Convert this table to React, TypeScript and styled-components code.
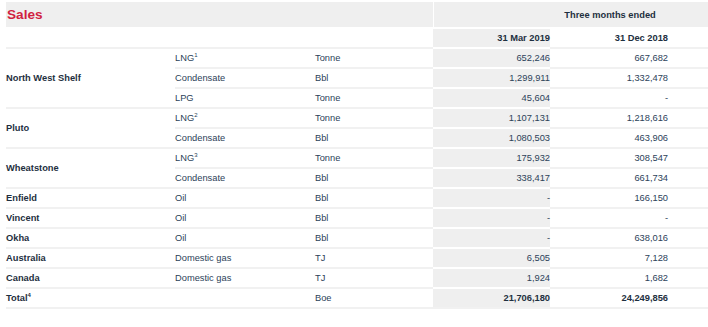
import React from 'react';
import styled, { createGlobalStyle } from 'styled-components';

const GlobalStyle = createGlobalStyle`
  html, body {
    margin: 0;
    padding: 0;
    background: #fff;
    overflow: hidden;
  }
  body {
    font-family: 'Liberation Sans', Arial, sans-serif;
  }
`;

/* styled components */
const Wrapper = styled.div`
  padding: 2px 0 0 6px;
`;

const Table = styled.table`
  border-collapse: separate;
  border-spacing: 0;
  table-layout: fixed;
  width: 702px;
  font-size: 9.3px;
  color: #2c4259;
`;

const TitleCell = styled.th`
  height: 25px;
  padding: 0 0 0 1px;
  background: #efefef;
  text-align: left;
  font-size: 13.6px;
  font-weight: bold;
  color: #d11f41;
`;

const PeriodCell = styled.th`
  padding: 0 0 0 78px;
  background: #efefef;
  border-left: 1px solid #fff;
  text-align: center;
  font-weight: bold;
  color: #1e2f40;
  white-space: nowrap;
`;

const DateCell = styled.th<{ $shaded?: boolean }>`
  height: 18px;
  padding: 0;
  border-top: 2px solid #fff;
  background: ${(p) => (p.$shaded ? '#efefef' : 'transparent')};
  text-align: right;
  font-weight: bold;
  color: #1e2f40;
`;

const Cell = styled.td<{ $shaded?: boolean; $right?: boolean; $bold?: boolean; $last?: boolean }>`
  height: 18px;
  padding: 0;
  border-top: 2px solid ${(p) => (p.$shaded ? '#fff' : '#f1f1f1')};
  border-bottom: ${(p) => (p.$last ? '2px solid #f1f1f1' : 'none')};
  background: ${(p) => (p.$shaded ? '#efefef' : 'transparent')};
  text-align: ${(p) => (p.$right ? 'right' : 'left')};
  font-weight: ${(p) => (p.$bold ? 'bold' : 'normal')};
  color: ${(p) => (p.$bold ? '#1e2f40' : '#2c4259')};
  white-space: nowrap;
  vertical-align: middle;
`;

const Sup = styled.sup`
  font-size: 6px;
  line-height: 0;
  vertical-align: 4px;
`;

type SalesRow = {
  product: string;
  note?: string;
  unit: string;
  current: string;
  previous: string;
};

type Asset = { name: string; rows: SalesRow[] };

const assets: Asset[] = [
  {
    name: 'North West Shelf',
    rows: [
      { product: 'LNG', note: '1', unit: 'Tonne', current: '652,246', previous: '667,682' },
      { product: 'Condensate', unit: 'Bbl', current: '1,299,911', previous: '1,332,478' },
      { product: 'LPG', unit: 'Tonne', current: '45,604', previous: '-' },
    ],
  },
  {
    name: 'Pluto',
    rows: [
      { product: 'LNG', note: '2', unit: 'Tonne', current: '1,107,131', previous: '1,218,616' },
      { product: 'Condensate', unit: 'Bbl', current: '1,080,503', previous: '463,906' },
    ],
  },
  {
    name: 'Wheatstone',
    rows: [
      { product: 'LNG', note: '3', unit: 'Tonne', current: '175,932', previous: '308,547' },
      { product: 'Condensate', unit: 'Bbl', current: '338,417', previous: '661,734' },
    ],
  },
  { name: 'Enfield', rows: [{ product: 'Oil', unit: 'Bbl', current: '-', previous: '166,150' }] },
  { name: 'Vincent', rows: [{ product: 'Oil', unit: 'Bbl', current: '-', previous: '-' }] },
  { name: 'Okha', rows: [{ product: 'Oil', unit: 'Bbl', current: '-', previous: '638,016' }] },
  { name: 'Australia', rows: [{ product: 'Domestic gas', unit: 'TJ', current: '6,505', previous: '7,128' }] },
  { name: 'Canada', rows: [{ product: 'Domestic gas', unit: 'TJ', current: '1,924', previous: '1,682' }] },
];

export default function App() {
  return (
    <Wrapper>
      <GlobalStyle />
      <Table>
        <colgroup>
          <col style={{ width: 169 }} />
          <col style={{ width: 140 }} />
          <col style={{ width: 118 }} />
          <col style={{ width: 117 }} />
          <col style={{ width: 118 }} />
          <col style={{ width: 40 }} />
        </colgroup>
        <thead>
          <tr>
            <TitleCell colSpan={3}>Sales</TitleCell>
            <PeriodCell colSpan={3}>Three months ended</PeriodCell>
          </tr>
          <tr>
            <DateCell colSpan={3} />
            <DateCell $shaded>31 Mar 2019</DateCell>
            <DateCell>31 Dec 2018</DateCell>
            <DateCell />
          </tr>
        </thead>
        <tbody>
          {assets.map((asset) =>
            asset.rows.map((row, i) => (
              <tr key={asset.name + row.product}>
                {i === 0 && (
                  <Cell rowSpan={asset.rows.length} $bold>
                    {asset.name}
                  </Cell>
                )}
                <Cell>
                  {row.product}
                  {row.note && <Sup>{row.note}</Sup>}
                </Cell>
                <Cell>{row.unit}</Cell>
                <Cell $shaded $right>
                  {row.current}
                </Cell>
                <Cell $right>{row.previous}</Cell>
                <Cell />
              </tr>
            ))
          )}
          <tr>
            <Cell $bold $last>
              Total<Sup>4</Sup>
            </Cell>
            <Cell $last />
            <Cell $last>Boe</Cell>
            <Cell $shaded $right $bold $last>
              21,706,180
            </Cell>
            <Cell $right $bold $last>
              24,249,856
            </Cell>
            <Cell $last />
          </tr>
        </tbody>
      </Table>
    </Wrapper>
  );
}
